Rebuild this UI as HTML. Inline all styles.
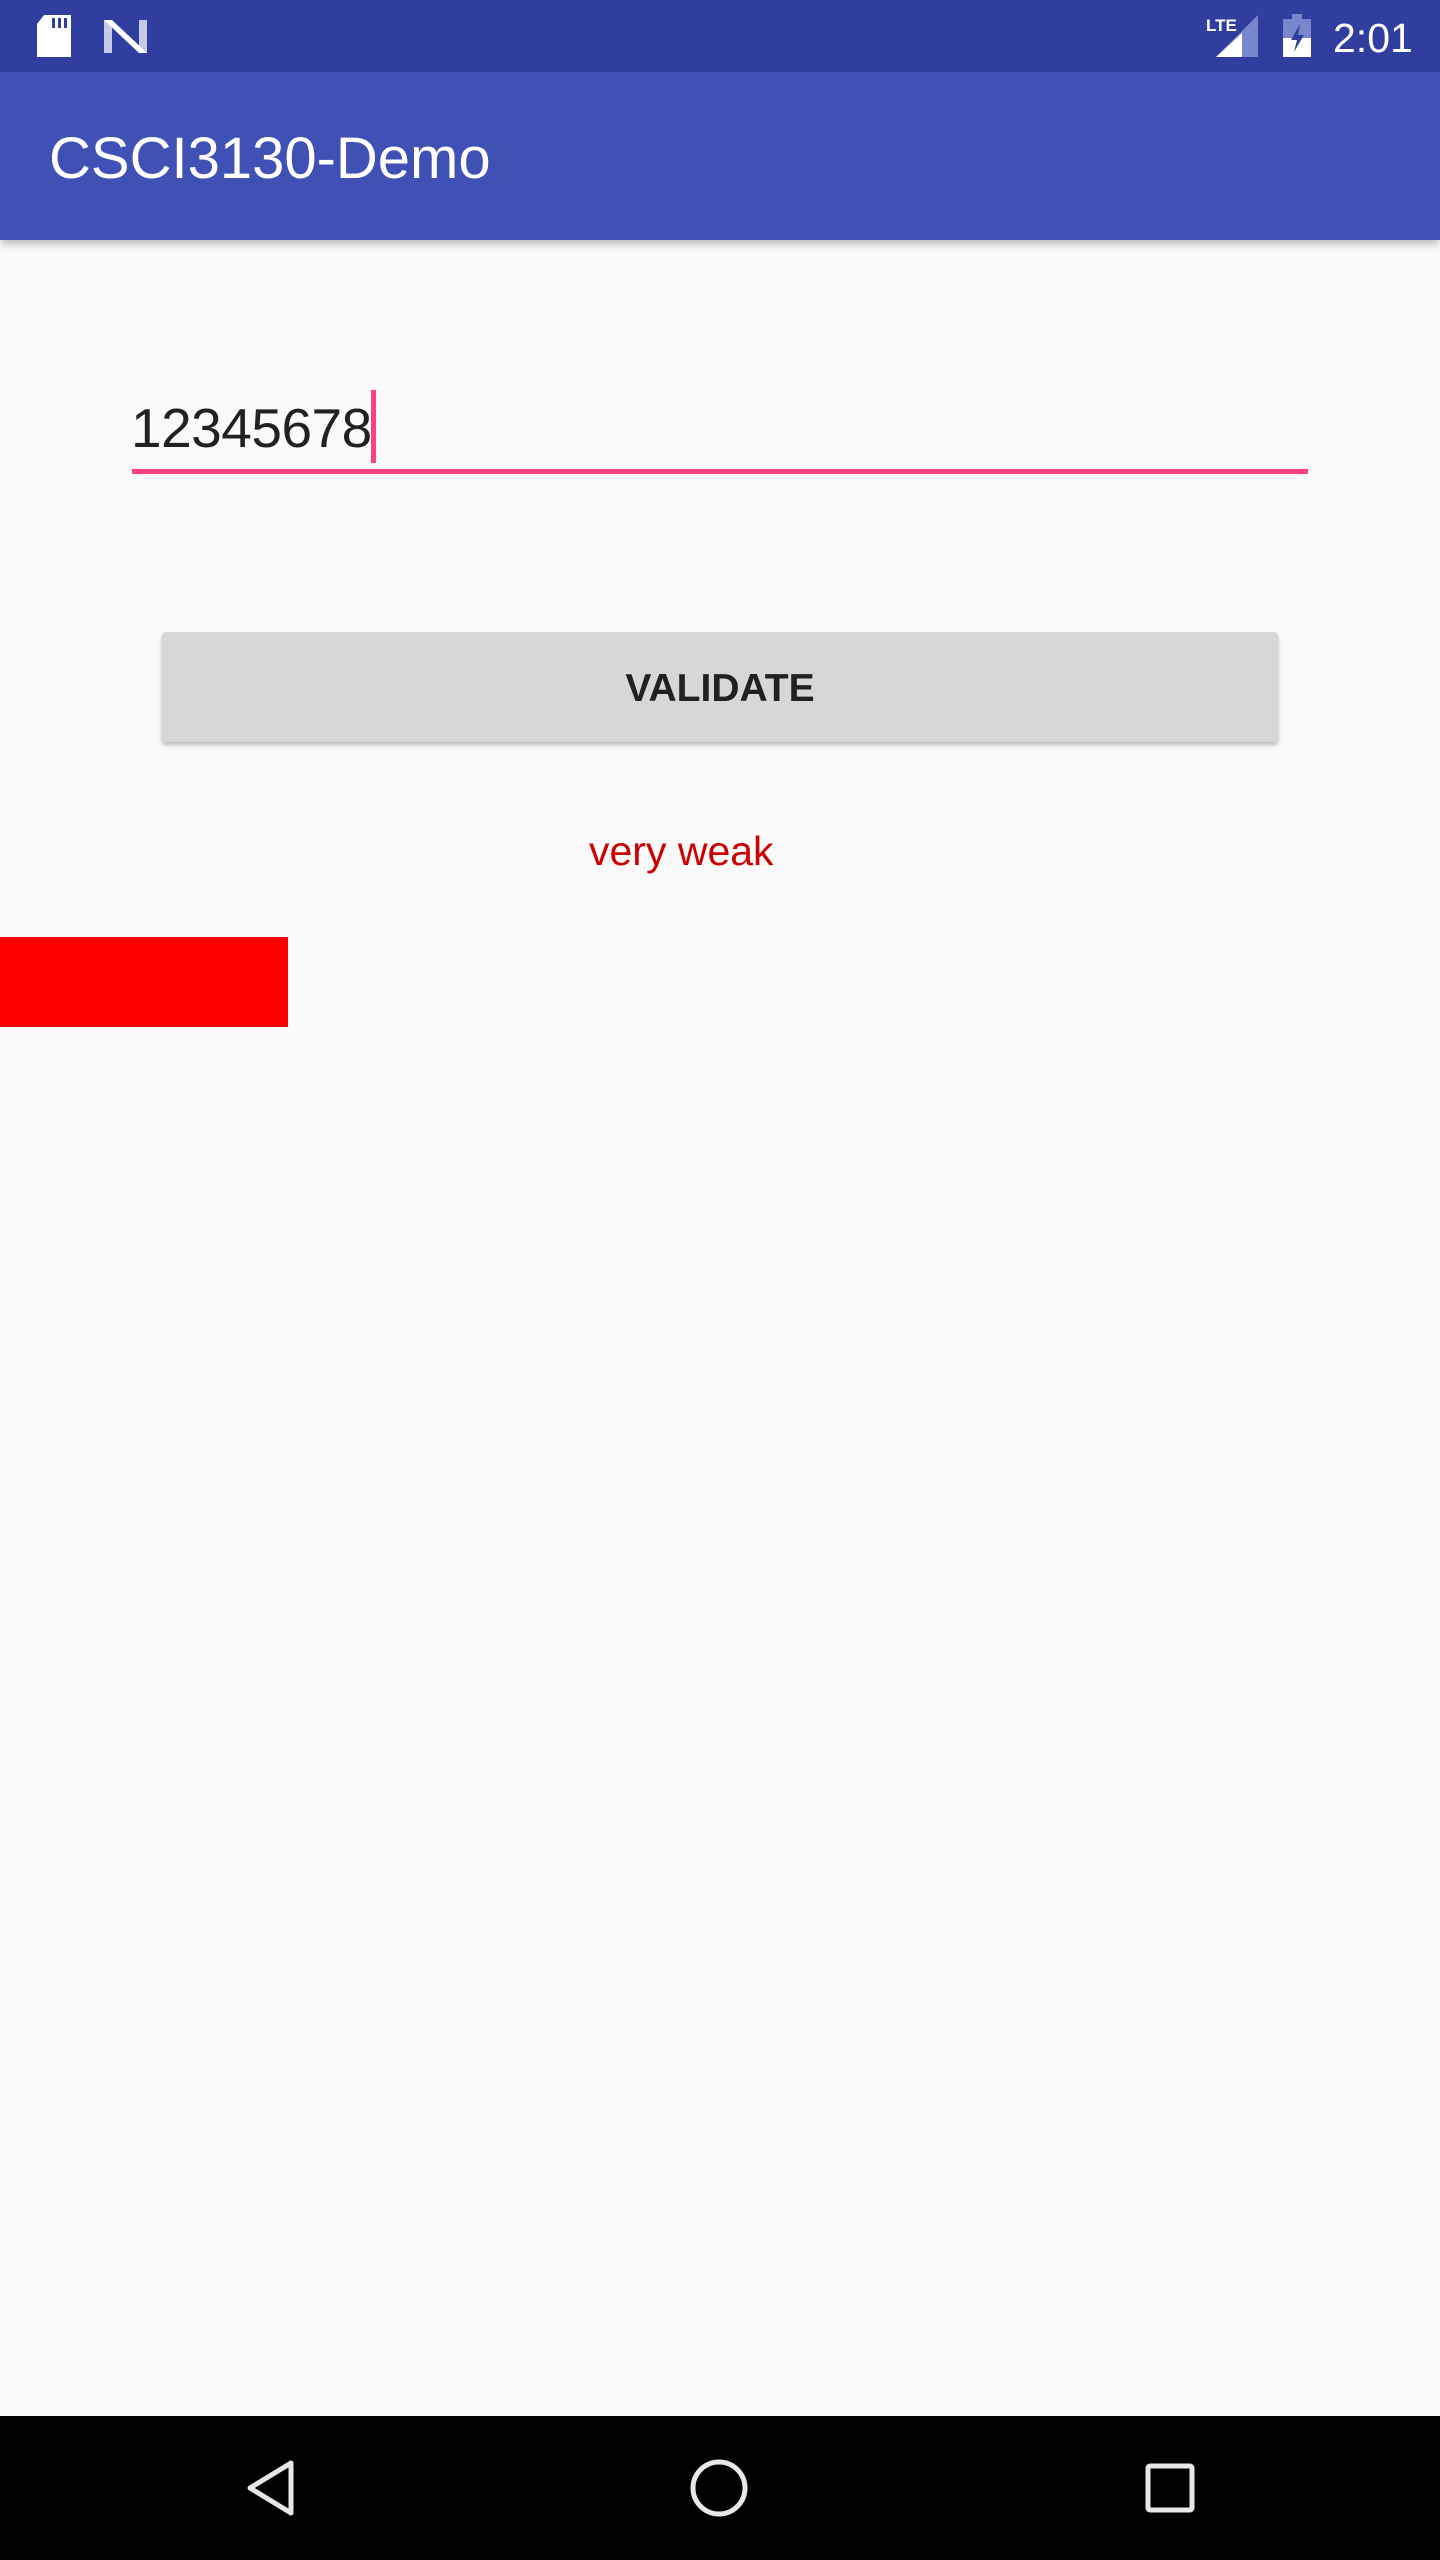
<!DOCTYPE html>
<html><head><meta charset="utf-8"><style>
html,body{margin:0;padding:0}
body{width:1440px;height:2560px;background:#fafafa;position:relative;overflow:hidden;font-family:"Liberation Sans",sans-serif}
.a{position:absolute}
</style></head><body>
<div class="a" style="left:0;top:0;width:1440px;height:72px;background:#303f9f"></div>
<div class="a" style="left:0;top:72px;width:1440px;height:168px;background:#3f51b5;box-shadow:0 4px 8px rgba(0,0,0,0.25)"></div>
<svg class="a" style="left:0;top:0" width="1440" height="72">
 <path d="M44 15 H71 V57 H37 V24 Z" fill="#fff"/>
 <rect x="52" y="18" width="3" height="10" fill="#303f9f"/><rect x="58" y="18" width="3" height="10" fill="#303f9f"/><rect x="64" y="18" width="3" height="10" fill="#303f9f"/>
 <path d="M104 20 H112 V53 H104 Z" fill="#c5cae9"/>
 <path d="M139 20 H147 V53 H139 Z" fill="#c5cae9"/>
 <path d="M104 20 H112 L147 53 H139 Z" fill="#fff"/>
 <path d="M1258 15 V57 H1216 Z" fill="#7986cb"/>
 <path d="M1242 33 V57 H1216 Z" fill="#fff"/>
 <text x="1206" y="31" font-size="17" font-weight="bold" fill="#fff">LTE</text>
 <rect x="1292" y="14" width="10" height="5" fill="#7986cb"/>
 <rect x="1283" y="19" width="28" height="38" fill="#7986cb"/>
 <rect x="1283" y="38" width="28" height="19" fill="#fff"/>
 <path d="M1300 24 L1291 40 H1297 L1294 52 L1304 35 H1298 Z" fill="#303f9f"/>
 <text x="1333" y="52" font-size="41" fill="#fff">2:01</text>
</svg>
<div class="a" style="left:49px;top:119px;font-size:58px;color:#fff;line-height:80px;height:80px">CSCI3130-Demo</div>
<div class="a" style="left:131px;top:388px;font-size:55px;color:#212121;line-height:80px;letter-spacing:-0.5px">12345678</div>
<div class="a" style="left:371px;top:390px;width:5px;height:73px;background:#ff4081"></div>
<div class="a" style="left:132px;top:469px;width:1176px;height:5px;background:#ff4081"></div>
<div class="a" style="left:162px;top:632px;width:1116px;height:110px;background:#d6d7d7;border-radius:4px;box-shadow:0 3px 4px rgba(0,0,0,0.25)"></div>
<div class="a" style="left:162px;top:632px;width:1116px;height:110px;line-height:114px;text-align:center;font-size:39px;font-weight:bold;color:#212121">VALIDATE</div>
<div class="a" style="left:589px;top:821px;font-size:41px;color:#cc0000;line-height:60px">very weak</div>
<div class="a" style="left:0;top:937px;width:288px;height:90px;background:#ff0000"></div>
<div class="a" style="left:0;top:2416px;width:1440px;height:144px;background:#000"></div>
<svg class="a" style="left:0;top:2416px" width="1440" height="144">
 <path d="M291 47 V97 L250 72 Z" fill="none" stroke="#e8e8e8" stroke-width="5" stroke-linejoin="round"/>
 <circle cx="719" cy="72" r="26" fill="none" stroke="#e8e8e8" stroke-width="5"/>
 <rect x="1148" y="50" width="44" height="44" fill="none" stroke="#e8e8e8" stroke-width="5" rx="2"/>
</svg>
</body></html>
